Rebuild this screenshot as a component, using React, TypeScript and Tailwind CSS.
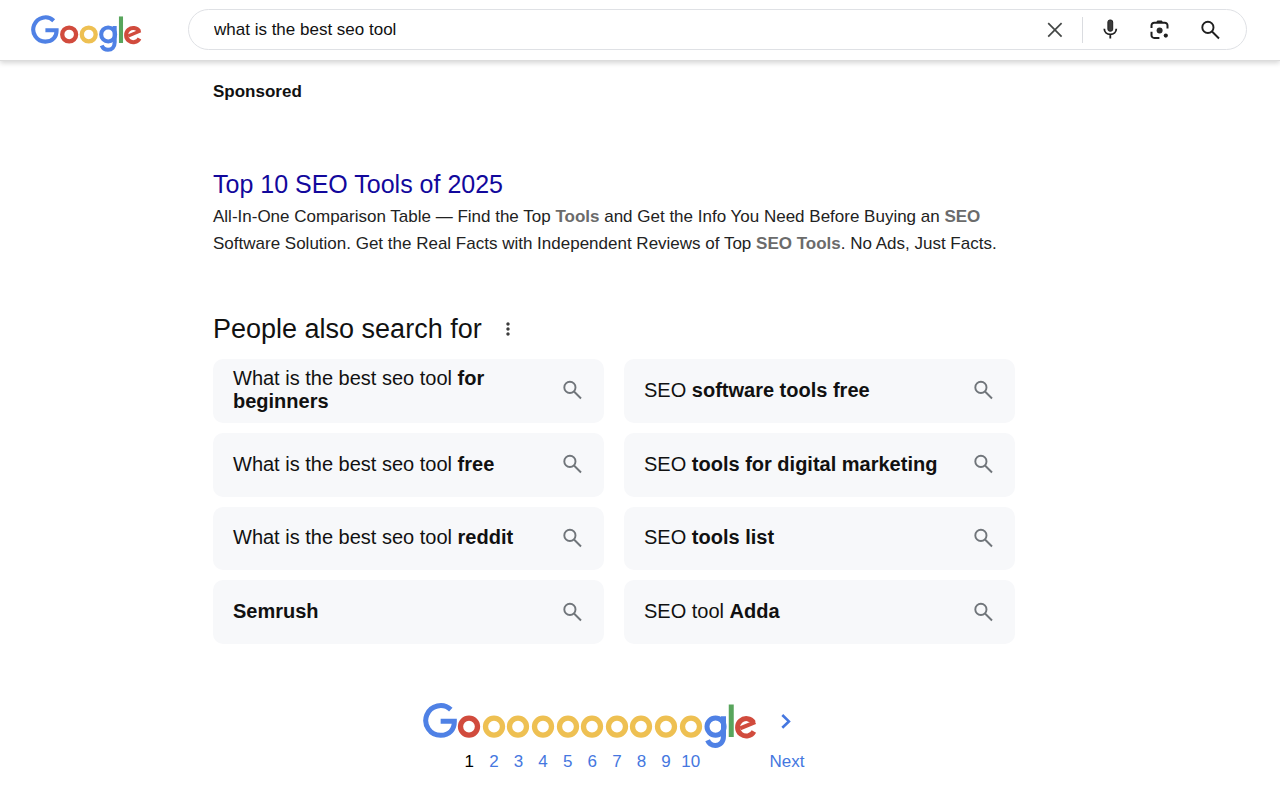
import React from "react";
import { MdMoreVert } from "react-icons/md";

const BLUE = "#4f81e5";
const RED = "#d14b3d";
const YELLOW = "#eec052";
const GREEN = "#58a55c";

type Suggestion = {
    plain?: string;
    bold: string;
};

const suggestions: Suggestion[] = [
    { plain: "What is the best seo tool", bold: "for beginners" },
    { plain: "SEO", bold: "software tools free" },
    { plain: "What is the best seo tool", bold: "free" },
    { plain: "SEO", bold: "tools for digital marketing" },
    { plain: "What is the best seo tool", bold: "reddit" },
    { plain: "SEO", bold: "tools list" },
    { bold: "Semrush" },
    { plain: "SEO tool", bold: "Adda" },
];

const pages = [1, 2, 3, 4, 5, 6, 7, 8, 9, 10];

// Logo parts share one 272x92 coordinate space
const LogoStart = () => (
    <path
        d="M55.6 13.3A29.7 29.7 0 1 0 35.3 64.6C53 64.6 62.9 53 62.7 36.7H35.3"
        fill="none"
        stroke={BLUE}
        strokeWidth={10}
    />
);

const LogoRing = ({ cx, color }: { cx: number; color: string }) => (
    <circle cx={cx} cy={47.2} r={17} fill="none" stroke={color} strokeWidth={10.6} />
);

const LogoEnd = () => (
    <>
        <g fill="none" stroke={BLUE} strokeWidth={10}>
            <circle cx={189.1} cy={47.2} r={17.1} />
            <path d="M205 26.3V66.2C205 78.5 198 84.8 188.7 84.8C181 84.8 175.5 80 173.2 74.4" />
        </g>
        <rect x={215.5} y={3} width={10} height={65} fill={GREEN} />
        <g fill="none" stroke={RED}>
            <path d="M265.8 57A17.4 17.4 0 1 1 265.2 39.3" strokeWidth={10} />
            <path d="M238.2 50.8L268.5 38.2" strokeWidth={8} />
        </g>
    </>
);

const Logo = () => (
    <svg viewBox="0 0 272 92" className="w-[111px] h-[38px]" aria-hidden="true">
        <LogoStart />
        <LogoRing cx={93.5} color={RED} />
        <LogoRing cx={141.5} color={YELLOW} />
        <LogoEnd />
    </svg>
);

const SearchIcon = ({ className }: { className: string }) => (
    <svg viewBox="0 0 24 24" className={className} fill="none" stroke="currentColor" strokeWidth={1.9} aria-hidden="true">
        <circle cx={9.9} cy={9.4} r={5.6} />
        <path d="M14 13.5l7 7" />
    </svg>
);

const ClearIcon = () => (
    <svg viewBox="0 0 24 24" className="w-6 h-6" fill="none" stroke="#444746" strokeWidth={1.7}>
        <path d="M5.2 5.2l13.4 13.4M18.6 5.2L5.2 18.6" />
    </svg>
);

const MicIcon = () => (
    <svg viewBox="0 0 24 24" className="w-6 h-6" fill="none" stroke="#1f1f1f" strokeWidth={1.8}>
        <rect x={9.9} y={2} width={4.8} height={11.2} rx={2} fill="#3c3c3c" stroke="#1f1f1f" strokeWidth={1} />
        <path d="M6.3 10.8c0 3.3 2.6 5.6 6 5.6s6-2.3 6-5.6M12.3 16.4v4.2" />
    </svg>
);

const LensIcon = () => (
    <svg viewBox="0 0 24 24" className="w-6 h-6" fill="none" stroke="#1f1f1f" strokeWidth={2}>
        <path d="M3.5 10V7.4a2.7 2.7 0 0 1 2.7-2.7h10.6a2.7 2.7 0 0 1 2.7 2.7v3.2M3.5 13.8v3.4a2.7 2.7 0 0 0 2.7 2.7h5.2" />
        <path d="M7.8 4.8l1.6-2.3h4.3l1.6 2.3z" fill="#1f1f1f" stroke="none" />
        <circle cx={11.6} cy={12.5} r={3} fill="#2b2b2b" stroke="none" />
        <circle cx={17.8} cy={17.6} r={2.1} fill="#1f1f1f" stroke="none" />
    </svg>
);

const Header = () => (
    <header className="flex items-center h-[61px] pl-[31px] pr-[33px] pb-px border-b border-[#dcdcdc] shadow-[0_2px_5px_rgba(0,0,0,0.17)]">
        <a href="#" aria-label="Google" className="shrink-0 mt-2">
            <Logo />
        </a>
        <form role="search" className="flex flex-1 items-center h-[41px] ml-[46px] pl-[25px] pr-6 border border-[#dfe1e5] rounded-full">
            <input
                type="text"
                aria-label="Search"
                defaultValue="what is the best seo tool"
                className="flex-1 min-w-0 text-[17px] text-[#111] outline-none"
            />
            <button type="button" aria-label="Clear" className="mr-[15px]">
                <ClearIcon />
            </button>
            <div className="w-px h-[26px] bg-[#dadce0]" />
            <div className="flex items-center gap-[26px] ml-[15px]">
                <button type="button" aria-label="Search by voice">
                    <MicIcon />
                </button>
                <button type="button" aria-label="Search by image">
                    <LensIcon />
                </button>
                <button type="submit" aria-label="Search">
                    <SearchIcon className="w-6 h-6 text-[#1f1f1f]" />
                </button>
            </div>
        </form>
    </header>
);

const SponsoredResult = () => (
    <section>
        <h2 className="text-[17px] leading-6 font-bold">Sponsored</h2>
        <h3 className="mt-[62px] text-[25px] leading-9">
            <a href="#" className="text-[#12089c]">Top 10 SEO Tools of 2025</a>
        </h3>
        <p className="mt-px text-[17px] leading-[27px] text-[#222]">
            All-In-One Comparison Table — Find the Top <b className="text-[#6b6b6b]">Tools</b> and Get the Info You
            Need Before Buying an <b className="text-[#6b6b6b]">SEO</b> Software Solution. Get the Real Facts with
            Independent Reviews of Top <b className="text-[#6b6b6b]">SEO Tools</b>. No Ads, Just Facts.
        </p>
    </section>
);

const RelatedSearches = () => (
    <section className="mt-[54px]">
        <div className="flex items-center gap-4">
            <h2 className="text-[27px] leading-9">People also search for</h2>
            <button type="button" aria-label="About this result">
                <MdMoreVert className="w-5 h-5 text-[#3c3c3c]" />
            </button>
        </div>
        <div className="grid grid-cols-2 grid-rows-4 gap-x-5 gap-y-[10px] h-[285px] mt-3">
            {suggestions.map((item) => (
                <a
                    key={item.bold}
                    href="#"
                    className="flex items-center justify-between px-5 pb-px bg-[#f7f8fa] rounded-[10px] text-xl leading-[23px]"
                >
                    <span className="max-w-[300px]">
                        {item.plain} <b>{item.bold}</b>
                    </span>
                    <SearchIcon className="w-6 h-6 shrink-0 text-[#70757a]" />
                </a>
            ))}
        </div>
    </section>
);

const Pagination = () => (
    <nav aria-label="Pages" className="flex justify-center mt-[59px] text-[17px] leading-6 text-[#4577e0]">
        <svg viewBox="0 0 68 92" className="w-[34px] h-[46px]" aria-hidden="true">
            <LogoStart />
        </svg>
        <div className="grid grid-cols-10 w-[246px]">
            {pages.map((page) => (
                <a
                    key={page}
                    href="#"
                    aria-current={page === 1 ? "page" : undefined}
                    className="flex flex-col items-center gap-px aria-[current=page]:text-black"
                >
                    <svg viewBox="0 0 48 92" className="w-6 h-[46px]" aria-hidden="true">
                        <LogoRing cx={24} color={page === 1 ? RED : YELLOW} />
                    </svg>
                    {page}
                </a>
            ))}
        </div>
        <svg viewBox="164 0 108 92" className="w-[54px] h-[46px]" aria-hidden="true">
            <LogoEnd />
        </svg>
        <a href="#" className="flex flex-col items-center gap-px ml-3">
            <svg viewBox="0 0 36 46" className="w-9 h-[46px]" fill="none" stroke="#4577e0" strokeWidth={2.6} aria-hidden="true">
                <path d="M13.3 12l6.6 6.4-6.6 6.4" />
            </svg>
            Next
        </a>
    </nav>
);

const App = () => {
    return (
        <div className="min-h-screen bg-white font-['Liberation_Sans',Arial,sans-serif] text-[#111]">
            <Header />
            <main className="max-w-[802px] mt-[19px] ml-[213px] pb-4">
                <SponsoredResult />
                <RelatedSearches />
                <Pagination />
            </main>
        </div>
    );
};

export default App;
